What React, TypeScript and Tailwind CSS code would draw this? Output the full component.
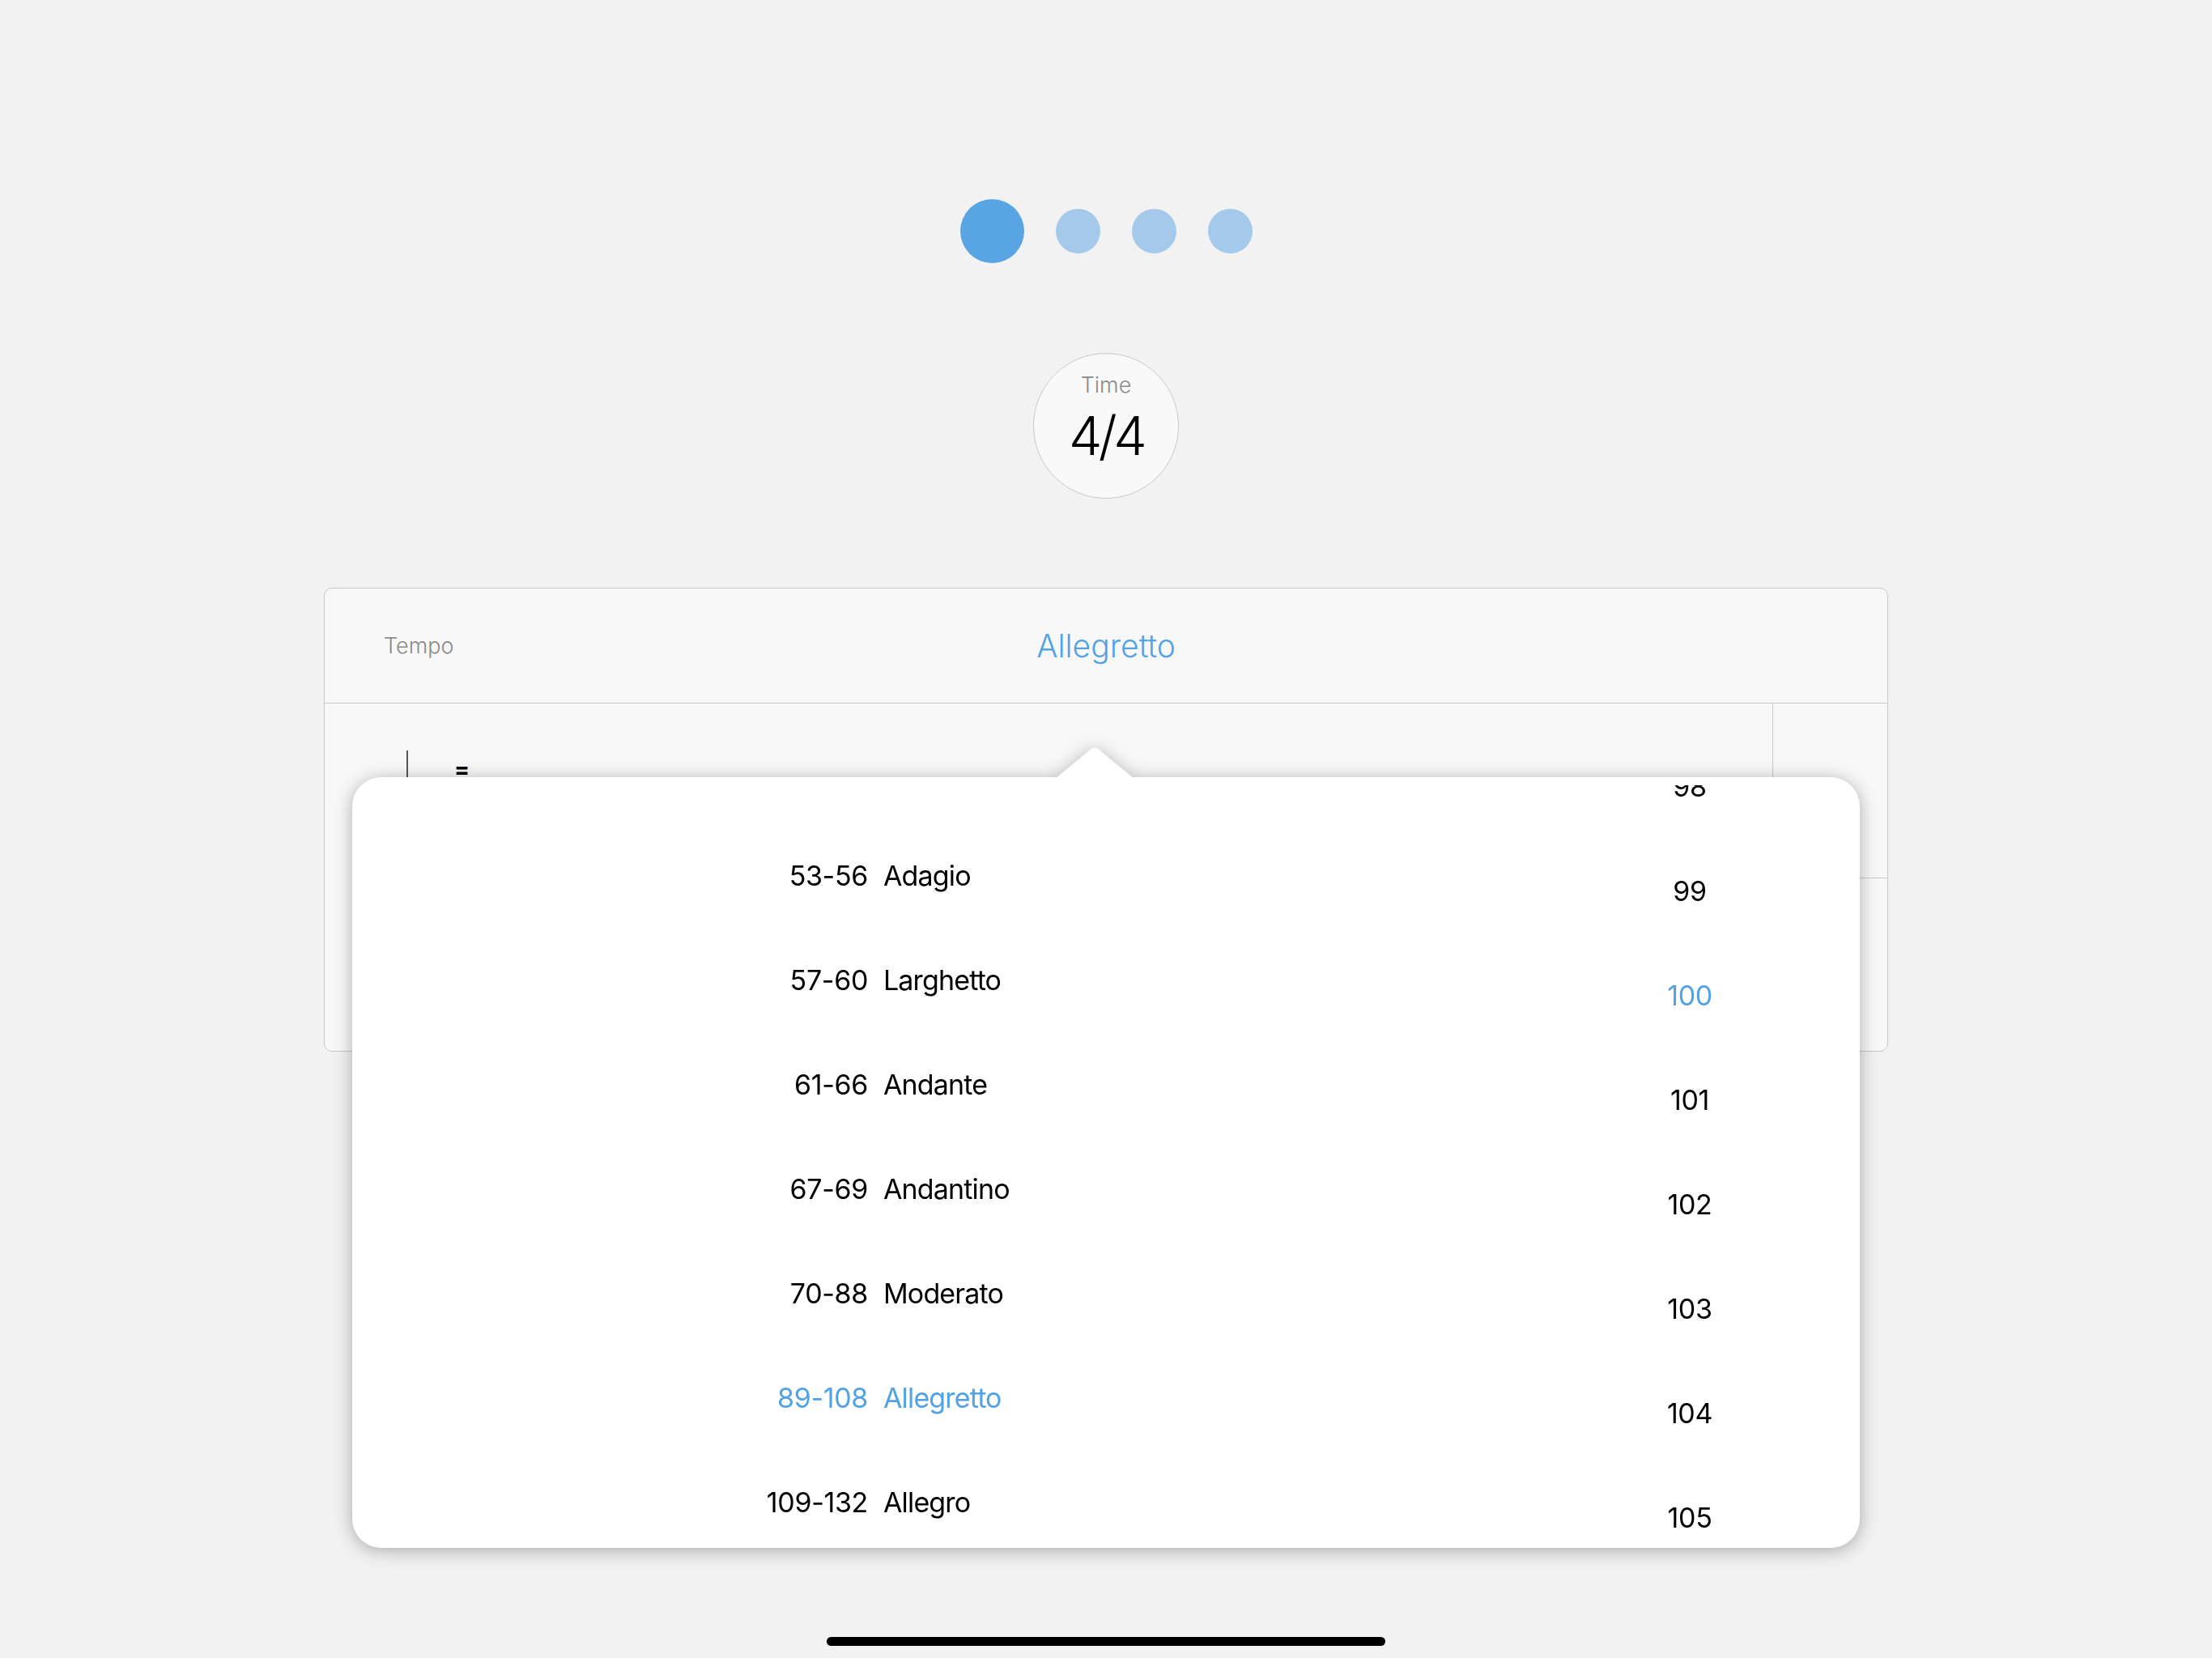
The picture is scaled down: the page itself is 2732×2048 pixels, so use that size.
import React from 'react';

const TEMPOS = [
  { range: '53-56', name: 'Adagio' },
  { range: '57-60', name: 'Larghetto' },
  { range: '61-66', name: 'Andante' },
  { range: '67-69', name: 'Andantino' },
  { range: '70-88', name: 'Moderato' },
  { range: '89-108', name: 'Allegretto' },
  { range: '109-132', name: 'Allegro' },
];

const BPMS = [98, 99, 100, 101, 102, 103, 104, 105];

const ACTIVE_TEMPO = 'Allegretto';
const ACTIVE_BPM = 100;

function PageDots() {
  return (
    <div className="flex items-center gap-[39px] h-[79px]">
      <div className="w-[79px] h-[79px] rounded-full bg-[#59a4e3]" />
      <div className="w-[55px] h-[55px] rounded-full bg-[#a4c9ea]" />
      <div className="w-[55px] h-[55px] rounded-full bg-[#a4c9ea]" />
      <div className="w-[55px] h-[55px] rounded-full bg-[#a4c9ea]" />
    </div>
  );
}

function TimeBadge() {
  return (
    <div className="mt-[111px] w-[180px] h-[180px] rounded-full border border-[#c9c9c9] bg-[#f9f9f9] flex flex-col items-center pt-[25px]">
      <div className="text-[27px] leading-none font-light text-[#8a8a8a]">Time</div>
      <div className="mt-[16px] text-[66px] leading-none font-light text-black tracking-[-0.07em]">4/4</div>
    </div>
  );
}

function TempoPopover() {
  return (
    <div className="absolute left-[34px] top-[233px] w-[1862px] drop-shadow-[0_3px_11px_rgba(0,0,0,0.3)]">
      {/* arrow */}
      <svg className="absolute left-[869px] -top-[37px]" width="96" height="38" viewBox="0 0 96 38">
        <path d="M0 38 L44 2 Q48 -1 52 2 L96 38 Z" fill="#ffffff" />
      </svg>
      <div className="relative h-[952px] rounded-[36px] bg-white overflow-hidden">
        {/* picker wheels */}
        <div className="mt-[10px] h-[932px] overflow-hidden flex">
          <div className="w-[1552px] pt-[47px]">
            {TEMPOS.map(t => {
              const active = t.name === ACTIVE_TEMPO;
              return (
                <div
                  key={t.range}
                  className={`h-[129px] flex items-center text-[34px] ${active ? 'text-[#52a2e4]' : 'text-black'}`}
                >
                  <div className="w-[637px] text-right tracking-[-0.01em]">{t.range}</div>
                  <div className="pl-[19px] tracking-[-0.025em]">{t.name}</div>
                </div>
              );
            })}
          </div>
          <div className="w-[200px] -mt-[63px]">
            {BPMS.map(b => (
              <div
                key={b}
                className={`h-[129px] flex items-center justify-center text-[34px] tracking-[-0.01em] ${b === ACTIVE_BPM ? 'text-[#52a2e4]' : 'text-black'}`}
              >
                {b}
              </div>
            ))}
          </div>
        </div>
      </div>
    </div>
  );
}

function TempoCard() {
  return (
    <div className="relative mt-[110px] w-[1932px] rounded-[10px] border border-[#c8c8c8] bg-[#f8f8f8]">
      <div className="h-[142px] grid grid-cols-[1fr_auto_1fr] items-center border-b border-[#c8c8c8]">
        <div className="pl-[73px] text-[27px] leading-none font-light text-[#8a8a8a]">Tempo</div>
        <div className="text-[39px] leading-none font-light text-[#52a2e4]">Allegretto</div>
        <div />
      </div>
      <div className="h-[215px] flex">
        <div className="flex-1 flex items-start pl-[85px] pt-[58px]">
          <svg width="22" height="48" viewBox="0 0 22 48">
            <line x1="17" y1="0" x2="17" y2="40" stroke="#222" strokeWidth="1.5" />
            <ellipse cx="10" cy="41" rx="8" ry="5.5" fill="#222" transform="rotate(-20 10 41)" />
          </svg>
          <div className="ml-[53px] mt-[9px] text-[28px] leading-none font-bold text-black">=</div>
        </div>
        <div className="w-[142px] border-l border-[#c8c8c8]" />
      </div>
      <div className="h-[214px] ml-[40px] border-t border-[#c8c8c8]" />
      <TempoPopover />
    </div>
  );
}

export default function App() {
  return (
    <div className="min-h-[2048px] bg-[#f2f2f2] flex flex-col items-center pt-[246px] font-['Inter',sans-serif] overflow-hidden">
      <PageDots />
      <TimeBadge />
      <TempoCard />
      <div className="mt-auto mb-[15px] w-[690px] h-[11px] rounded-full bg-black" />
    </div>
  );
}
